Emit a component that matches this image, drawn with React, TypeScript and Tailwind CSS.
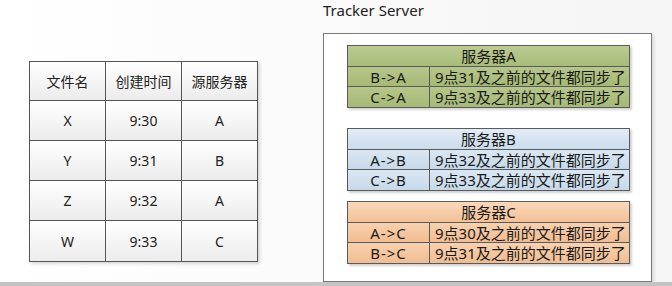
import React from 'react';

const font = { fontFamily: '"Noto Sans", "Noto Sans CJK SC", sans-serif' };

const files = [
  ['X', '9:30', 'A'],
  ['Y', '9:31', 'B'],
  ['Z', '9:32', 'A'],
  ['W', '9:33', 'C'],
];

type Server = {
  name: string;
  rows: [string, string][];
  head: string;
  cell: string;
};

const servers: Server[] = [
  {
    name: '服务器A',
    rows: [
      ['B->A', '9点31及之前的文件都同步了'],
      ['C->A', '9点33及之前的文件都同步了'],
    ],
    head: 'bg-gradient-to-b from-[#bccb94] to-[#a8bb78]',
    cell: 'bg-gradient-to-b from-[#b6c68a] to-[#a6b975]',
  },
  {
    name: '服务器B',
    rows: [
      ['A->B', '9点32及之前的文件都同步了'],
      ['C->B', '9点33及之前的文件都同步了'],
    ],
    head: 'bg-gradient-to-b from-[#e3ecf6] to-[#cadcec]',
    cell: 'bg-gradient-to-b from-[#dbe7f3] to-[#c6d9ea]',
  },
  {
    name: '服务器C',
    rows: [
      ['A->C', '9点30及之前的文件都同步了'],
      ['B->C', '9点31及之前的文件都同步了'],
    ],
    head: 'bg-gradient-to-b from-[#fad8ba] to-[#f3c197]',
    cell: 'bg-gradient-to-b from-[#f8d1ae] to-[#f1bd92]',
  },
];

function ServerTable({ s, className }: { s: Server; className?: string }) {
  return (
    <div
      className={`w-[283px] border border-[#5a5a5a] text-[15px] leading-[20px] text-[#1a1a1a] shadow-[2px_2px_2px_rgba(0,0,0,0.18)] ${className ?? ''}`}
    >
      <div className={`h-[21px] border-b border-[#5a5a5a] text-center ${s.head}`}>{s.name}</div>
      {s.rows.map(([k, v], i) => (
        <div
          key={k}
          className={`flex h-[20px] ${i === 0 ? 'border-b border-[#5a5a5a]' : ''} ${s.cell}`}
        >
          <div className="w-[82px] border-r border-[#5a5a5a] text-center tracking-[1px]">{k}</div>
          <div className="flex-1 pl-[5px]">{v}</div>
        </div>
      ))}
    </div>
  );
}

export default function App() {
  return (
    <div className="flex h-[286px] w-[672px] flex-col overflow-hidden bg-gradient-to-r from-white to-[#f5f5f5]" style={font}>
      <div className="flex h-[282px] items-start">
        {/* file list */}
        <div className="ml-[29px] mt-[61px] w-[229px] border border-[#555] text-[14px] text-[#222] shadow-[2px_2px_3px_rgba(0,0,0,0.15)]">
          <div className="grid h-[39px] grid-cols-[76px_76px_1fr] border-b border-[#555] bg-gradient-to-b from-white to-[#ececec]">
            <div className="flex items-center justify-center border-r border-[#555]">文件名</div>
            <div className="flex items-center justify-center border-r border-[#555]">创建时间</div>
            <div className="flex items-center justify-center">源服务器</div>
          </div>
          {files.map((r, i) => (
            <div
              key={r[0]}
              className={`grid h-[40px] grid-cols-[76px_76px_1fr] bg-gradient-to-b from-white to-[#ececec] ${i < files.length - 1 ? 'border-b border-[#555]' : ''}`}
            >
              <div className="flex items-center justify-center border-r border-[#555]">{r[0]}</div>
              <div className="flex items-center justify-center border-r border-[#555]">{r[1]}</div>
              <div className="flex items-center justify-center">{r[2]}</div>
            </div>
          ))}
        </div>

        {/* tracker */}
        <div className="ml-[65px] flex w-[329px] flex-col">
          <div className="h-[33px] text-[15px] leading-[20px] text-[#222]">Tracker Server</div>
          <div className="h-[249px] border border-[#7a7a7a] bg-white pl-[23px] pt-[11px] shadow-[2px_2px_3px_rgba(0,0,0,0.12)]">
            <ServerTable s={servers[0]} />
            <ServerTable s={servers[1]} className="mt-[20px]" />
            <ServerTable s={servers[2]} className="mt-[10px]" />
          </div>
        </div>
      </div>
      <div className="h-[4px] bg-[#c4c4c4]" />
    </div>
  );
}
